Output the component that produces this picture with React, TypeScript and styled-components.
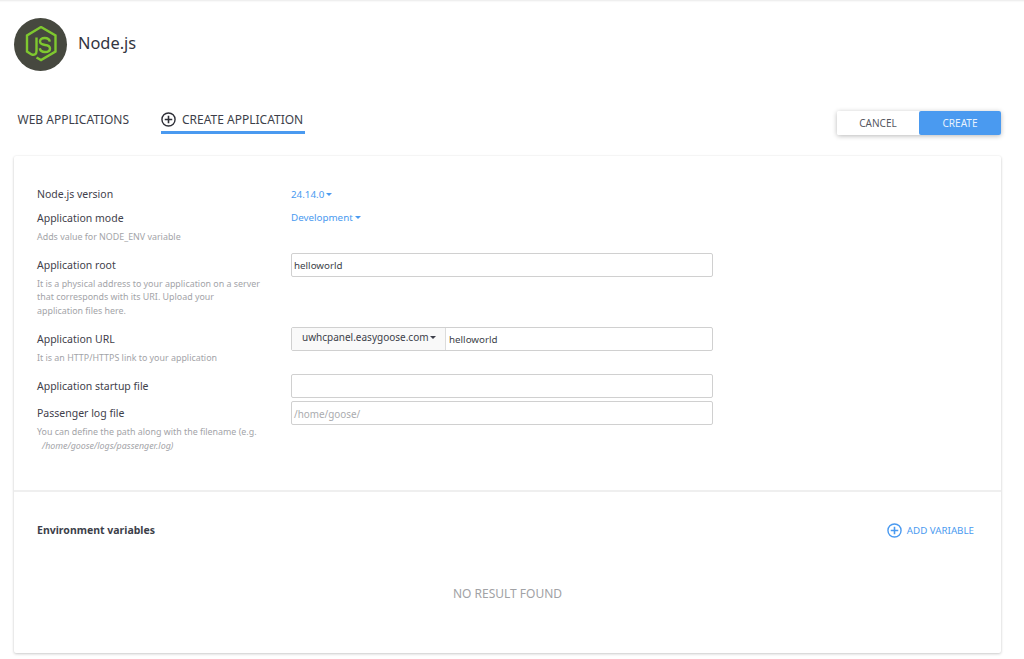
import styled, { createGlobalStyle } from 'styled-components';

const FONT = `'Noto Sans', 'Open Sans', sans-serif`;
const BLUE = '#4a9af0';

const GlobalStyle = createGlobalStyle`
  html, body {
    margin: 0;
    padding: 0;
    background: #fff;
    font-family: ${FONT};
    color: #3d3f4a;
    overflow: hidden;
  }
  * {
    box-sizing: border-box;
  }
`;

const Page = styled.div`
  height: 659px;
  padding: 18px 23px 0 14px;
  position: relative;
  box-shadow: inset 0 3px 2px -2px rgba(0, 0, 0, 0.09);
`;

const Header = styled.div`
  display: flex;
  align-items: center;
  height: 52px;
`;

const Logo = styled.div`
  width: 53px;
  height: 53px;
  border-radius: 50%;
  background: #46483f;
  display: flex;
  align-items: center;
  justify-content: center;
  margin-right: 11px;
`;

const Title = styled.h1`
  margin: 0 0 2px;
  font-size: 16.4px;
  font-weight: 400;
  line-height: 50px;
  color: #33353f;
`;

const TabBar = styled.div`
  display: flex;
  justify-content: space-between;
  height: 86px;
  padding: 39px 0 0 3.5px;
`;

const Tabs = styled.div`
  display: flex;
  gap: 32px;
`;

const Tab = styled.div<{ $active?: boolean }>`
  display: flex;
  align-items: center;
  gap: 6px;
  height: 25px;
  padding: 0 ${({ $active }) => ($active ? 2 : 0)}px 1px 0;
  font-size: 12px;
  line-height: 20px;
  color: #3d3f4a;
  border-bottom: 3px solid ${({ $active }) => ($active ? BLUE : 'transparent')};
`;

const Buttons = styled.div`
  display: flex;
  height: 24px;
  margin-top: 2px;
  border-radius: 2px;
  box-shadow: 0 1px 5px rgba(0, 0, 0, 0.28);
`;

const Button = styled.div<{ $primary?: boolean }>`
  width: 82px;
  display: flex;
  align-items: center;
  justify-content: center;
  font-size: 10px;
  border-radius: 2px;
  background: ${({ $primary }) => ($primary ? BLUE : '#fff')};
  color: ${({ $primary }) => ($primary ? '#e8f2fd' : '#55575f')};
`;

const Card = styled.div`
  width: 987px;
  height: 497px;
  background: #fff;
  border-radius: 2px;
  box-shadow: 0 1px 3px rgba(0, 0, 0, 0.2), 0 0 2px rgba(0, 0, 0, 0.05);
`;

const Form = styled.div`
  height: 336px;
  padding: 30px 23px 0;
  border-bottom: 2px solid #efefef;
`;

const Row = styled.div<{ $gap?: number }>`
  display: grid;
  grid-template-columns: 254px 422px;
  margin-top: ${({ $gap }) => $gap ?? 0}px;
`;

const Label = styled.div<{ $compact?: boolean }>`
  font-size: 10.5px;
  line-height: ${({ $compact }) => ($compact ? 16 : 24)}px;
  color: #3f414b;
`;

const Help = styled.div<{ $gap?: number }>`
  margin-top: ${({ $gap }) => $gap ?? 0}px;
  width: 224px;
  font-size: 8.9px;
  line-height: 13.5px;
  color: #a3a4a8;

  em {
    display: block;
    padding-left: 5px;
    font-style: italic;
  }
`;

const Selector = styled.div<{ $raise?: number }>`
  display: flex;
  align-items: center;
  gap: 2px;
  height: 16px;
  margin-top: ${({ $raise }) => -($raise ?? 0)}px;
  font-size: 9.8px;
  color: ${BLUE};
`;

const Caret = styled.span<{ $dark?: boolean }>`
  width: 0;
  height: 0;
  border-left: 3px solid transparent;
  border-right: 3px solid transparent;
  border-top: 3px solid ${({ $dark }) => ($dark ? '#3d3f4a' : BLUE)};
`;

const Input = styled.div<{ $placeholder?: boolean }>`
  height: 24px;
  padding: 1px 2px 0;
  display: flex;
  align-items: center;
  border: 1px solid #d0d0d0;
  border-radius: 2px;
  font-size: ${({ $placeholder }) => ($placeholder ? 9.9 : 9.8)}px;
  color: ${({ $placeholder }) => ($placeholder ? '#aaabae' : '#3d3f4a')};
`;

const InputGroup = styled.div`
  display: flex;
  height: 24px;
  border: 1px solid #d0d0d0;
  border-radius: 2px;
`;

const Domain = styled.div`
  width: 154px;
  display: flex;
  align-items: center;
  gap: 1px;
  padding: 0 0 3px 10px;
  font-size: 10px;
  color: #3d3f4a;
  background: #f9f9f9;
  border-right: 1px solid #dcdcdc;
`;

const GroupValue = styled.div`
  display: flex;
  align-items: center;
  padding: 1px 0 0 3px;
  font-size: 9.8px;
  color: #3d3f4a;
`;

const Variables = styled.div`
  padding: 29px 27px 0 23px;
`;

const VariablesHead = styled.div`
  display: flex;
  align-items: center;
  justify-content: space-between;
  height: 18px;
`;

const VariablesTitle = styled.div`
  font-size: 10.5px;
  font-weight: 700;
  color: #3d3f4a;
`;

const AddVariable = styled.div`
  display: flex;
  align-items: center;
  gap: 5px;
  font-size: 9.75px;
  color: ${BLUE};
`;

const Empty = styled.div`
  margin-top: 44.5px;
  padding-left: 4px;
  text-align: center;
  font-size: 12px;
  line-height: 20px;
  color: #a1a2a5;
`;

const PlusIcon = ({ color, size }: { color: string; size: number }) => (
  <svg width={size} height={size} viewBox="0 0 16 16" fill="none" stroke={color} strokeWidth="1.5">
    <circle cx="8" cy="8" r="7" />
    <path d="M8 4v8M4 8h8" strokeWidth="1.7" />
  </svg>
);

const NodeLogo = () => (
  <svg width="32" height="37" viewBox="0 0 32 37" fill="none" stroke="#7fc82f" strokeWidth="2.4">
    <path d="M11.5 31.5 L16 34 L30.5 25.5 V9.5 L16 1 L2 9.5 V25.5 L6.5 28.4 C9.4 29.6 11.5 28 11.5 25 V11.5" />
    <path d="M24.8 15.6 C24.4 13.2 22.4 12 19.8 12 C16.8 12 15 13.4 15 15.6 C15 18 17.2 18.6 20 19 C23 19.4 25 20.2 25 22.4 C25 24.7 23 26 20 26 C17 26 15.2 24.6 14.8 22.2" />
  </svg>
);

export default function App() {
  return (
    <Page>
      <GlobalStyle />
      <Header>
        <Logo>
          <NodeLogo />
        </Logo>
        <Title>Node.js</Title>
      </Header>
      <TabBar>
        <Tabs>
          <Tab>WEB APPLICATIONS</Tab>
          <Tab $active>
            <PlusIcon color="#2f3038" size={15} />
            CREATE APPLICATION
          </Tab>
        </Tabs>
        <Buttons>
          <Button>CANCEL</Button>
          <Button $primary>CREATE</Button>
        </Buttons>
      </TabBar>
      <Card>
        <Form>
          <Row>
            <Label $compact>Node.js version</Label>
            <Selector>
              24.14.0
              <Caret />
            </Selector>
          </Row>
          <Row $gap={8}>
            <div>
              <Label $compact>Application mode</Label>
              <Help $gap={4}>Adds value for NODE_ENV variable</Help>
            </div>
            <Selector $raise={1}>
              Development
              <Caret />
            </Selector>
          </Row>
          <Row $gap={9}>
            <div>
              <Label>Application root</Label>
              <Help>
                It is a physical address to your application on a server that corresponds with its
                URI. Upload your application files here.
              </Help>
            </div>
            <Input>helloworld</Input>
          </Row>
          <Row $gap={9.5}>
            <div>
              <Label>Application URL</Label>
              <Help>It is an HTTP/HTTPS link to your application</Help>
            </div>
            <InputGroup>
              <Domain>
                uwhcpanel.easygoose.com
                <Caret $dark />
              </Domain>
              <GroupValue>helloworld</GroupValue>
            </InputGroup>
          </Row>
          <Row $gap={10}>
            <Label>Application startup file</Label>
            <Input />
          </Row>
          <Row $gap={3}>
            <div>
              <Label>Passenger log file</Label>
              <Help>
                You can define the path along with the filename (e.g.
                <em>/home/goose/logs/passenger.log)</em>
              </Help>
            </div>
            <Input $placeholder>/home/goose/</Input>
          </Row>
        </Form>
        <Variables>
          <VariablesHead>
            <VariablesTitle>Environment variables</VariablesTitle>
            <AddVariable>
              <PlusIcon color={BLUE} size={15} />
              ADD VARIABLE
            </AddVariable>
          </VariablesHead>
          <Empty>NO RESULT FOUND</Empty>
        </Variables>
      </Card>
    </Page>
  );
}
